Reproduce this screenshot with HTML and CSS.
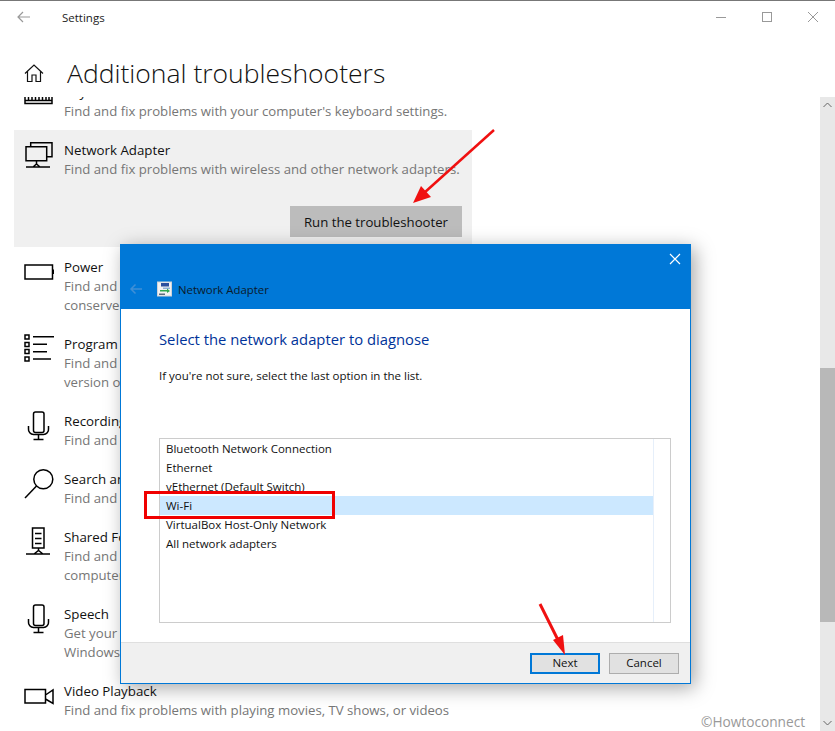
FILE: index.html
```html
<!DOCTYPE html>
<html lang="en">
<head>
<meta charset="utf-8">
<title>Settings</title>
<link rel="stylesheet" href="styles.css">
</head>
<body>
<div class="window">
  <header class="titlebar">
    <svg class="back" width="16" height="12" viewBox="0 0 16 12"><path d="M14 6H2M7 1 2 6l5 5"/></svg>
    <span class="app-name">Settings</span>
    <div class="controls">
      <svg width="12" height="12" viewBox="0 0 12 12"><path d="M1 6.500h10"/></svg>
      <svg width="12" height="12" viewBox="0 0 12 12"><rect x="1.500" y="1.500" width="9" height="9"/></svg>
      <svg width="12" height="12" viewBox="0 0 12 12"><path d="M1 1l10 10M11 1 1 11"/></svg>
    </div>
  </header>
  <div class="pagehead">
    <svg class="home" width="20" height="20" viewBox="0 0 20 20"><path d="M1 10.500 10 2l9 8.500M3.500 8.500V18.500H8V12h4v6.500h4.500V8.500"/></svg>
    <h1>Additional troubleshooters</h1>
  </div>
  <div class="content">
    <div class="listwrap">
      <div class="list">
        <div class="row">
          <svg class="ico" width="32" height="32" viewBox="0 0 32 32"><path d="M3 18.500h27v3H3zM3 15v3M6.500 15v3M10 15v3M13.500 15v3M17 15v3M20.500 15v3M24 15v3M27 15v3M30 15v3"/></svg>
          <div class="txt"><div class="name">Keyboard</div><div class="desc">Find and fix problems with your computer's keyboard settings.</div></div>
        </div>
        <div class="row selected">
          <div class="rowtop">
            <svg class="ico" width="32" height="32" viewBox="0 0 32 32"><path d="M8.700 6.500V2.700H30V16.700H25M4 6.700h20.700v14H4zM14.500 20.700v3.500M11 27l3.500-3 3.500 3M4 27h24"/></svg>
            <div class="txt"><div class="name">Network Adapter</div><div class="desc">Find and fix problems with wireless and other network adapters.</div></div>
          </div>
          <div class="rowaction"><button class="run">Run the troubleshooter</button></div>
        </div>
        <div class="row">
          <svg class="ico" width="32" height="32" viewBox="0 0 32 32"><path d="M3 8h27.500v14H3z"/><path class="fill" d="M31 12.500h1.500v4.500H31z"/></svg>
          <div class="txt"><div class="name">Power</div><div class="desc">Find and fix problems with your computer's power settings to conserve power and extend battery life.</div></div>
        </div>
        <div class="row">
          <svg class="ico" width="32" height="32" viewBox="0 0 32 32"><path d="M3 1h4v4H3zM3 8.500h4v4H3zM3 15.500h4v4H3zM3 23h4v4H3zM11 2.700h21M11 10.300h14M11 17.700h14M11 25h18"/></svg>
          <div class="txt"><div class="name">Program Compatibility Troubleshooter</div><div class="desc">Find and fix problems with running older programs on this version of Windows.</div></div>
        </div>
        <div class="row">
          <svg class="ico" width="32" height="32" viewBox="0 0 32 32"><rect x="11.500" y="1" width="10.500" height="20.500" rx="2"/><path d="M6.500 15v3a5 5 0 0 0 5 5.500h10a5 5 0 0 0 5-5.500v-3M16.500 23.500V28.500M11.500 28.500h10"/></svg>
          <div class="txt"><div class="name">Recording Audio</div><div class="desc">Find and fix problems with recording sound.</div></div>
        </div>
        <div class="row">
          <svg class="ico" width="32" height="32" viewBox="0 0 32 32"><circle cx="21.300" cy="10.300" r="9.500"/><path d="M14.500 17 3 29"/></svg>
          <div class="txt"><div class="name">Search and Indexing</div><div class="desc">Find and fix problems with Windows Search.</div></div>
        </div>
        <div class="row">
          <svg class="ico" width="32" height="32" viewBox="0 0 32 32"><path d="M10.500 1h11.500v20H10.500zM13 6.500h6.500M13 11.500h6.500M13 16.500h6.500M16.500 21v2.500M12 27l4.500-3.500 4.500 3.500M4 27h24"/></svg>
          <div class="txt"><div class="name">Shared Folders</div><div class="desc">Find and fix problems with accessing files and folders on other computers.</div></div>
        </div>
        <div class="row">
          <svg class="ico" width="32" height="32" viewBox="0 0 32 32"><rect x="11.500" y="1" width="10.500" height="20.500" rx="2"/><path d="M6.500 15v3a5 5 0 0 0 5 5.500h10a5 5 0 0 0 5-5.500v-3M16.500 23.500V28.500M11.500 28.500h10"/></svg>
          <div class="txt"><div class="name">Speech</div><div class="desc">Get your microphone ready and fix problems that may prevent Windows from hearing you.</div></div>
        </div>
        <div class="row">
          <svg class="ico" width="32" height="32" viewBox="0 0 32 32"><path d="M3 8.500h20.500v13.500H3zM23.500 14l7.500-5v13.500l-7.500-4.500"/></svg>
          <div class="txt"><div class="name">Video Playback</div><div class="desc">Find and fix problems with playing movies, TV shows, or videos</div></div>
        </div>
      </div>
    </div>
    <div class="scrollbar">
      <svg class="chev" width="15" height="16" viewBox="0 0 15 16"><path d="M3.500 10 7.500 6l4 4"/></svg>
      <div class="track"><div class="thumb"></div></div>
      <svg class="chev" width="15" height="16" viewBox="0 0 15 16"><path d="M3.500 6l4 4 4-4"/></svg>
    </div>
  </div>
</div>

<section class="dialog">
  <div class="dlg-head">
    <div class="dlg-closebar">
      <svg width="12" height="12" viewBox="0 0 12 12"><path d="M1 1l10 10M11 1 1 11"/></svg>
    </div>
    <div class="dlg-title">
      <svg class="dlg-back" width="14" height="12" viewBox="0 0 14 12"><path d="M13 6H2M6.500 1.500 2 6l4.500 4.500"/></svg>
      <svg class="dlg-icon" width="15" height="16" viewBox="0 0 15 16">
        <rect x="0" y="0.500" width="15" height="15" fill="#cfd3d8"/>
        <rect x="1" y="1.500" width="13" height="13" fill="#f2f2f2"/>
        <path d="M4 2h8v3.500H4z" fill="#2b4f9e"/>
        <path d="M6 6.500h7v1.500H6z" fill="#8fb0d8"/>
        <path d="M3 9h7V7.500l3 2.500-3 2v-1.500H3z" fill="#2fa84f"/>
        <path d="M2 12.500h6V14H2z" fill="#5d6a7c"/>
      </svg>
      <span>Network Adapter</span>
    </div>
  </div>
  <div class="dlg-body">
    <h2>Select the network adapter to diagnose</h2>
    <p>If you're not sure, select the last option in the list.</p>
    <div class="picker">
      <ul>
        <li>Bluetooth Network Connection</li>
        <li>Ethernet</li>
        <li>vEthernet (Default Switch)</li>
        <li class="on">Wi-Fi</li>
        <li>VirtualBox Host-Only Network</li>
        <li>All network adapters</li>
      </ul>
    </div>
  </div>
  <div class="dlg-foot">
    <button class="btn primary">Next</button>
    <button class="btn">Cancel</button>
  </div>
</section>

<div class="redbox"></div>
<svg class="arrows" width="835" height="731" viewBox="0 0 835 731">
  <path class="shaft" d="M494 130 424 193"/>
  <path class="head" d="M413 203 421 186 431 197z"/>
  <path class="shaft thick" d="M540 604 559 642"/>
  <path class="head" d="M565 655 553 640 563 635z"/>
</svg>
<div class="mark">©Howtoconnect</div>
</body>
</html>
```
FILE: styles.css
```css
* { box-sizing: border-box; }
html, body { margin: 0; padding: 0; }
body {
  position: relative;
  width: 835px;
  height: 731px;
  overflow: hidden;
  background: #fff;
  font-family: "Open Sans", "Noto Sans", sans-serif;
  color: #000;
}
.window {
  display: flex;
  flex-direction: column;
  height: 731px;
  border-top: 1px solid #777;
}
.titlebar {
  display: flex;
  align-items: center;
  height: 34px;
  flex: none;
  padding: 0 0 2px 16px;
}
.back path { fill: none; stroke: #999; stroke-width: 1.2; }
.app-name { margin-left: 30px; font-size: 11.5px; color: #222; }
.controls {
  margin-left: auto;
  display: flex;
  gap: 34px;
  padding-right: 16px;
}
.controls svg * { fill: none; stroke: #999; stroke-width: 1; }
.pagehead {
  display: flex;
  align-items: center;
  height: 62px;
  flex: none;
  padding: 13px 0 0 24px;
}
.home path { fill: none; stroke: #111; stroke-width: 1.2; }
h1 {
  margin: 0 0 0 23px;
  font-size: 26.5px;
  font-weight: 300;
  line-height: 36px;
  color: #111;
}
.content { display: flex; flex: 1; min-height: 0; }
.listwrap { flex: 1; overflow: hidden; padding-left: 14px; }
.list { width: 458px; margin-top: -25px; }
.row {
  display: flex;
  padding: 10px 0 9px 8px;
}
.row.selected {
  display: block;
  background: #f0f0f0;
  padding-bottom: 10px;
}
.rowtop { display: flex; }
.rowaction { display: flex; justify-content: flex-end; margin-top: 27px; padding-right: 10px; }
.run {
  width: 172px;
  height: 31px;
  border: 0;
  background: #bcbcbc;
  font: inherit;
  font-size: 13.2px;
  color: #111;
  padding: 0;
}
.ico { flex: none; margin-right: 10px; }
.ico path, .ico rect, .ico circle { fill: none; stroke: #000; stroke-width: 1.5; }
.ico .fill { fill: #000; stroke: none; }
.txt { width: 398px; }
.name { font-size: 13.3px; line-height: 20px; color: #111; }
.desc { font-size: 13.2px; line-height: 19px; color: #767676; }
.scrollbar {
  flex: none;
  width: 15px;
  display: flex;
  flex-direction: column;
  background: #e8e8e8;
}
.chev { flex: none; }
.chev path { fill: none; stroke: #666; stroke-width: 1; }
.track { flex: 1; padding-top: 255px; }
.thumb { height: 254px; background: #b8b8b8; }

.dialog {
  position: absolute;
  left: 120px;
  top: 244px;
  width: 571px;
  height: 440px;
  border: 1px solid #0078d7;
  background: #fff;
  display: flex;
  flex-direction: column;
  box-shadow: 4px 4px 18px rgba(0, 0, 0, .35);
}
.dlg-head { height: 64px; flex: none; background: #0078d7; }
.dlg-closebar { display: flex; justify-content: flex-end; height: 30px; padding: 8px 9px 0 0; }
.dlg-closebar path { fill: none; stroke: #fff; stroke-width: 1.2; }
.dlg-title {
  display: flex;
  align-items: center;
  height: 28px;
  padding-left: 8px;
  font-size: 11.4px;
  color: #0b1a2b;
}
.dlg-back { margin-right: 14px; }
.dlg-back path { fill: none; stroke: #3f8fd6; stroke-width: 1.5; }
.dlg-icon { margin-right: 6px; }
.dlg-body { flex: 1; padding: 19px 19px 0 38px; }
h2 {
  margin: 0;
  font-size: 14.8px;
  font-weight: 400;
  line-height: 22px;
  color: #003399;
}
.dlg-body p { margin: 17px 0 0; font-size: 11.5px; line-height: 18px; color: #111; }
.picker {
  margin-top: 53px;
  height: 185px;
  border: 1px solid #ccc;
}
.picker ul {
  list-style: none;
  margin: 0 16px 0 0;
  padding: 0;
  height: 100%;
  border-right: 1px solid #e6effa;
}
.picker li {
  height: 19px;
  line-height: 19px;
  padding-left: 6px;
  font-size: 11.5px;
  color: #111;
}
.picker li.on { background: #cce8ff; }
.dlg-foot {
  flex: none;
  height: 41px;
  display: flex;
  justify-content: flex-end;
  align-items: center;
  gap: 9px;
  padding-right: 11px;
  background: #f0f0f0;
  border-top: 1px solid #dfdfdf;
}
.btn {
  width: 70px;
  height: 21px;
  padding: 0 0 1px;
  border: 1px solid #adadad;
  background: #e1e1e1;
  font: inherit;
  font-size: 11.5px;
  color: #111;
}
.btn.primary { border: 2px solid #0078d7; }

.redbox {
  position: absolute;
  left: 144px;
  top: 491px;
  width: 191px;
  height: 28px;
  border: 3px solid #f00000;
}
.arrows { position: absolute; left: 0; top: 0; pointer-events: none; }
.shaft { fill: none; stroke: #f01010; stroke-width: 2.5; }
.shaft.thick { stroke-width: 3; }
.head { fill: #f01010; }
.mark {
  position: absolute;
  left: 701px;
  top: 713px;
  font-size: 13.7px;
  line-height: 18px;
  color: #999;
}
```
